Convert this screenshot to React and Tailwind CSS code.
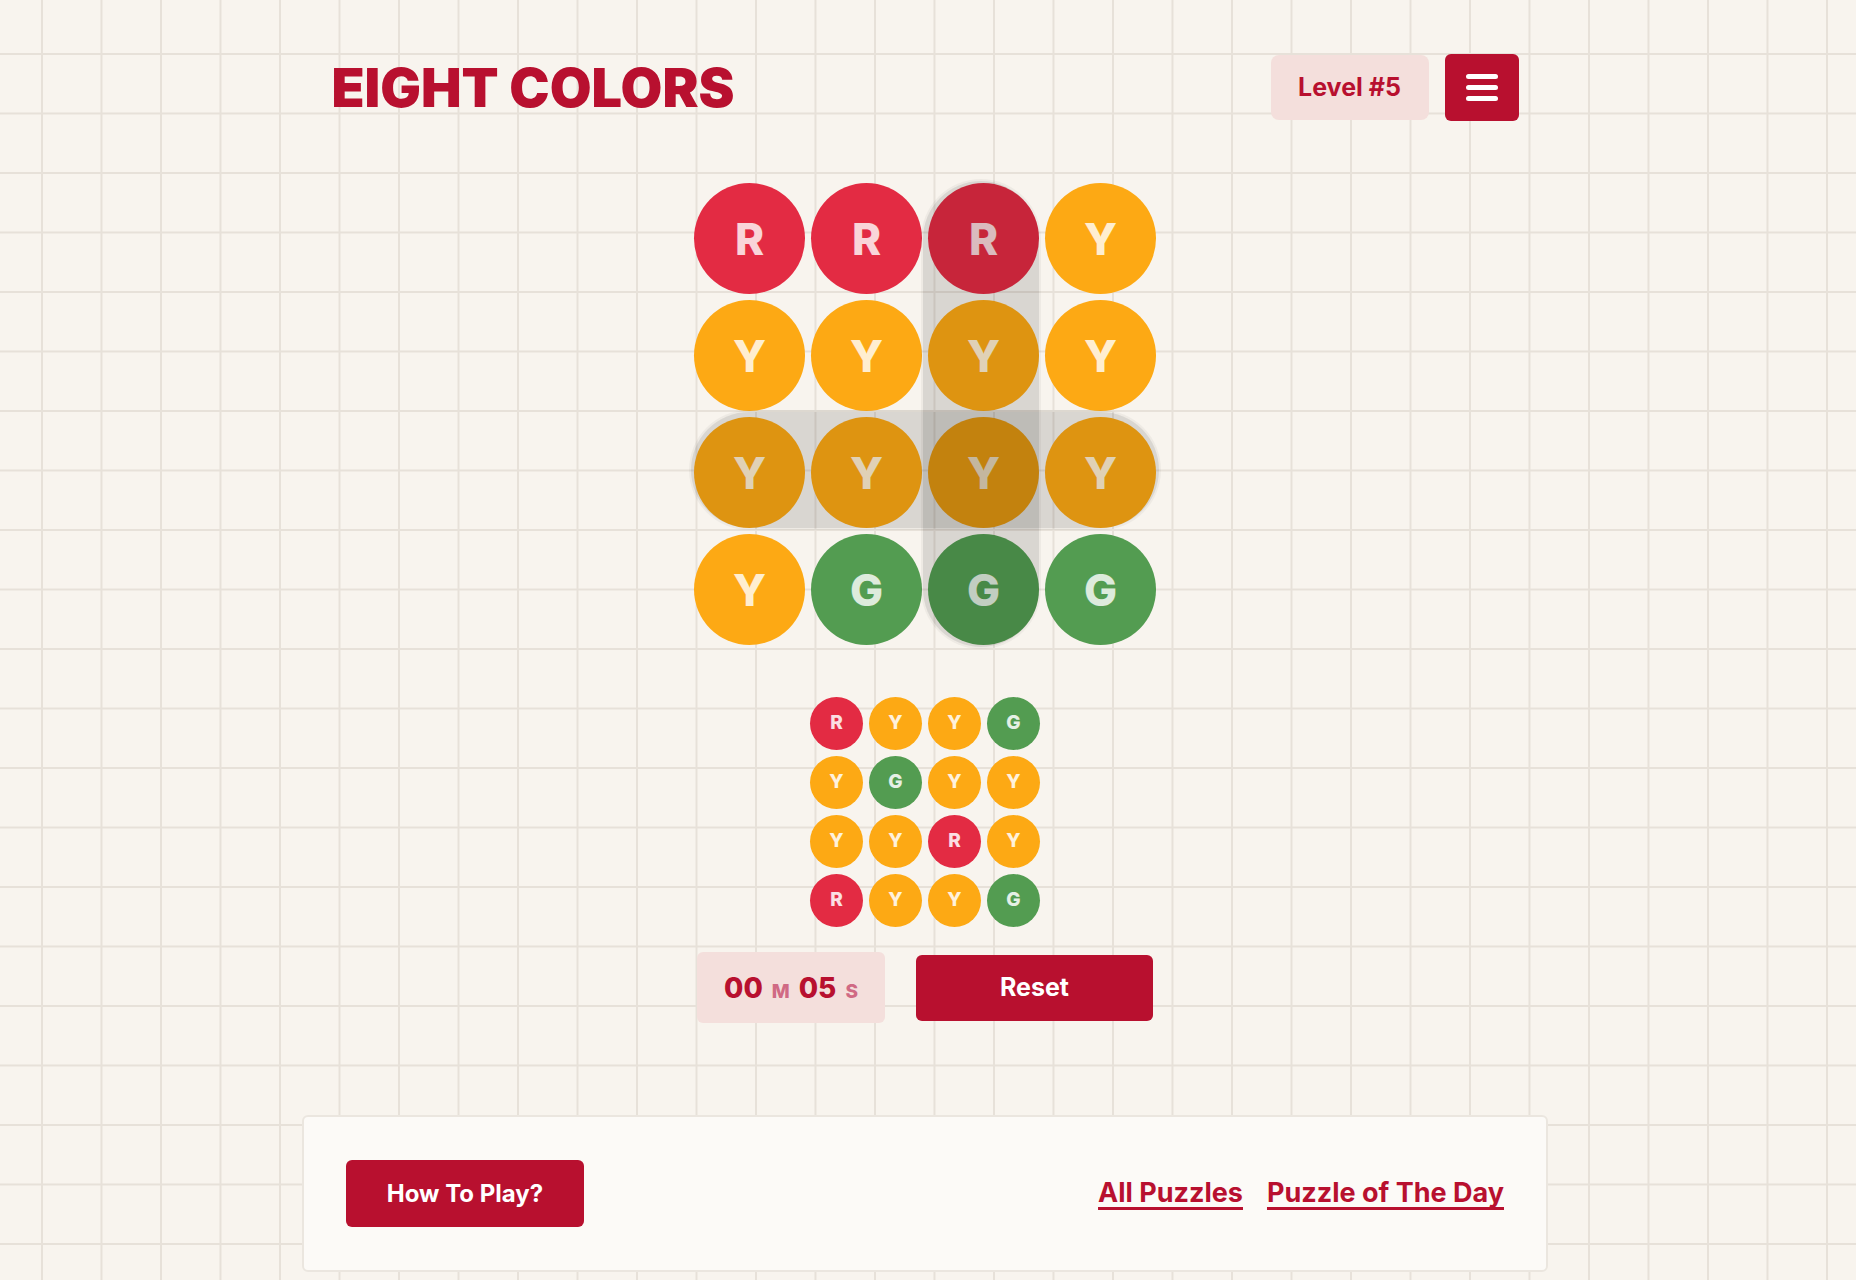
const BIG = [
  ['R', 'R', 'R', 'Y'],
  ['Y', 'Y', 'Y', 'Y'],
  ['Y', 'Y', 'Y', 'Y'],
  ['Y', 'G', 'G', 'G'],
]

const SMALL = [
  ['R', 'Y', 'Y', 'G'],
  ['Y', 'G', 'Y', 'Y'],
  ['Y', 'Y', 'R', 'Y'],
  ['R', 'Y', 'Y', 'G'],
]

const COLOR = { R: 'bg-[#e32b43]', Y: 'bg-[#fda914]', G: 'bg-[#539c51]' }

export default function App() {
  return (
    <div className="min-h-screen bg-[#f8f4ee] bg-[linear-gradient(to_right,#e7e1d9_2px,transparent_2px),linear-gradient(to_bottom,#e7e1d9_2px,transparent_2px)] bg-[size:59.5px_59.5px] bg-[position:41px_53px] font-['Inter',sans-serif] text-[#b8102f]">
      <div className="flex flex-col items-center pt-[54px] pb-[8px] pr-[6px]">
        {/* header */}
        <header className="w-[1187px] flex items-center justify-between">
          <h1 className="text-[54px] leading-none font-black tracking-[0px]">EIGHT COLORS</h1>
          <div className="flex items-center gap-[16px]">
            <div className="w-[158px] h-[65px] rounded-lg bg-[#f4dfdc] flex items-center justify-center text-[25px] font-bold">Level #5</div>
            <button className="w-[74px] h-[67px] rounded-md bg-[#b8102f] flex flex-col items-center justify-center gap-[6px]">
              <span className="block w-[32px] h-[5px] rounded-full bg-white" />
              <span className="block w-[32px] h-[5px] rounded-full bg-white" />
              <span className="block w-[32px] h-[5px] rounded-full bg-white" />
            </button>
          </div>
        </header>

        {/* board */}
        <div className="relative mt-[62px]">
          <div className="grid grid-cols-4 gap-[6px]">
            {BIG.flat().map((c, i) => (
              <div key={i} className={`w-[111px] h-[111px] rounded-full ${COLOR[c]} flex items-center justify-center text-[44px] font-extrabold text-white/80`}>{c}</div>
            ))}
          </div>
          <div className="absolute left-[229px] top-[-2px] w-[116px] h-[466px] rounded-full bg-black/[0.12] shadow-[0_0_0_2px_rgba(0,0,0,0.04)]" />
          <div className="absolute left-[-3px] top-[229px] w-[468px] h-[116px] rounded-full bg-black/[0.12] shadow-[0_0_0_2px_rgba(0,0,0,0.04)]" />
        </div>

        {/* target */}
        <div className="mt-[52px] grid grid-cols-4 gap-[6px]">
          {SMALL.flat().map((c, i) => (
            <div key={i} className={`w-[53px] h-[53px] rounded-full ${COLOR[c]} flex items-center justify-center text-[19px] font-extrabold text-white/85`}>{c}</div>
          ))}
        </div>

        {/* timer + reset */}
        <div className="mt-[25px] flex items-center gap-[31px]">
          <div className="w-[188px] h-[71px] rounded-md bg-[#f4dfdc] flex items-center justify-center font-extrabold">
            <div className="flex items-baseline leading-none">
              <span className="text-[28px]">00</span>
              <span className="text-[19px] text-[#d06a84] mx-[9px]">M</span>
              <span className="text-[28px]">05</span>
              <span className="text-[19px] text-[#d06a84] ml-[9px]">S</span>
            </div>
          </div>
          <button className="w-[237px] h-[66px] rounded-md bg-[#b8102f] text-white text-[25px] font-bold">Reset</button>
        </div>

        {/* footer card */}
        <div className="mt-[92px] w-[1246px] h-[157px] rounded-md bg-[#fcfaf7] border-2 border-[#ebe6df] px-[42px] flex items-center justify-between">
          <button className="w-[238px] h-[67px] rounded-md bg-[#b8102f] text-white text-[24px] font-bold">How To Play?</button>
          <div className="flex items-center gap-[24px] text-[27px] font-bold">
            <a href="#" className="underline decoration-[3px] underline-offset-[5px]">All Puzzles</a>
            <a href="#" className="underline decoration-[3px] underline-offset-[5px]">Puzzle of The Day</a>
          </div>
        </div>
      </div>
    </div>
  )
}
